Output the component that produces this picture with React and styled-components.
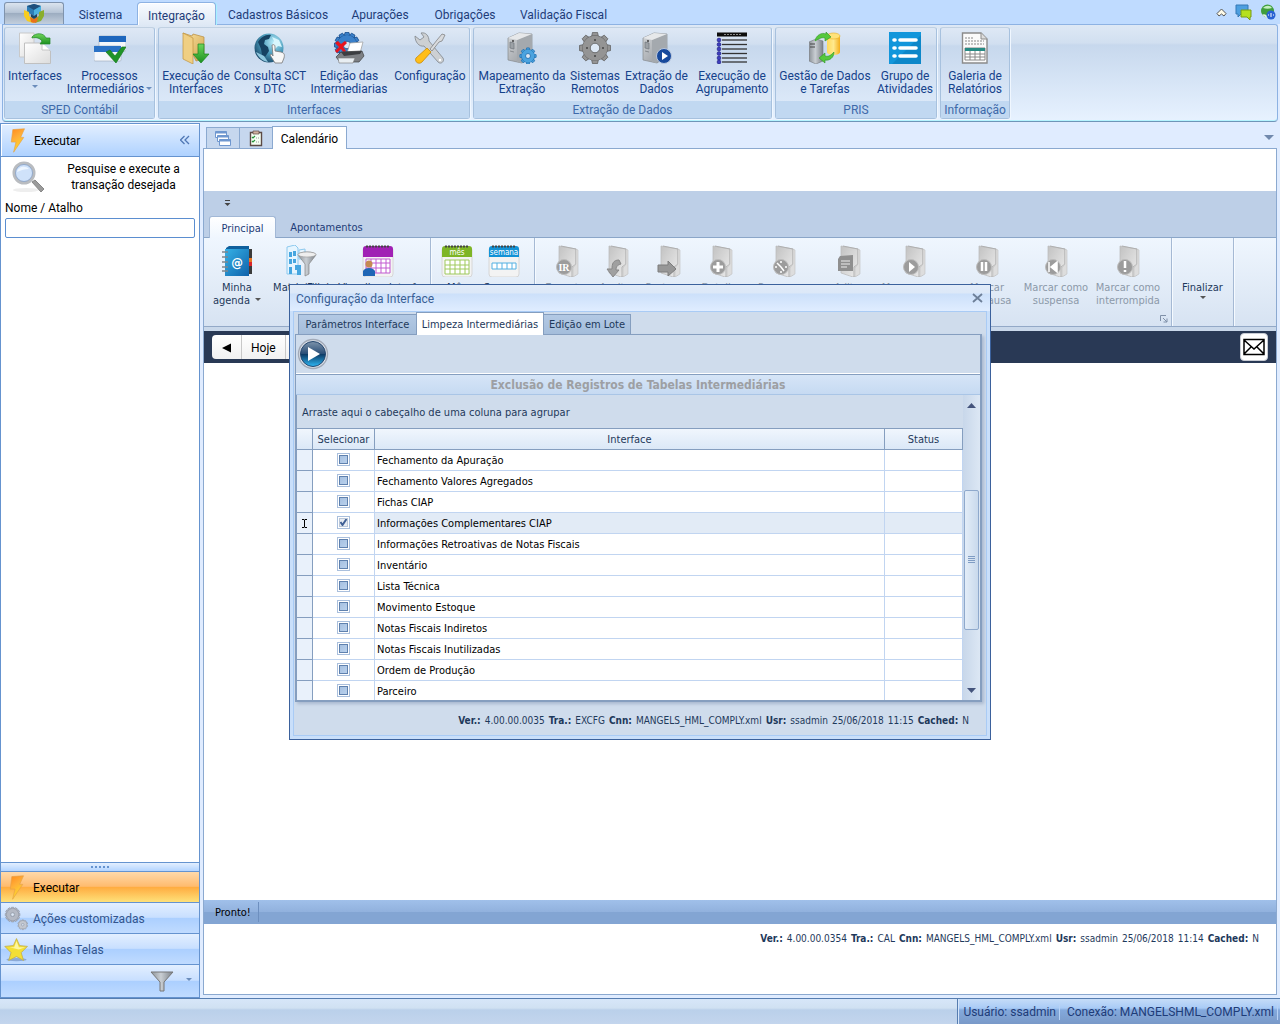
// App.jsx

import React, { useState } from 'react';
import styled, { createGlobalStyle, css } from 'styled-components';

const segoe = "Roboto, 'Open Sans', sans-serif";
const tahoma = "'DejaVu Sans Condensed', 'DejaVu Sans', sans-serif";

const GlobalStyle = createGlobalStyle`
  * {
    box-sizing: border-box;
  }
  body {
    margin: 0;
    font-family: ${segoe};
    font-size: 12px;
    color: #1e3c78;
    background: #e0ecff;
  }
  button, input {
    font: inherit;
    color: inherit;
    margin: 0;
  }
  button {
    padding: 0;
    border: 0;
    background: none;
    white-space: nowrap;
  }
  svg {
    display: block;
    flex: none;
  }
`;

const Page = styled.div`
  position: relative;
  min-height: 100vh;
  display: flex;
  flex-direction: column;
  overflow: hidden;
`;

/* ---------- top ribbon ---------- */

const TopBar = styled.header`
  height: 24px;
  display: flex;
  align-items: flex-end;
  padding: 0 4px;
  background: #bfdbff;
`;

const AppButton = styled.button`
  width: 60px;
  height: 22px;
  display: flex;
  justify-content: center;
  border: 1px solid #7f93ad;
  border-bottom: 0;
  border-radius: 3px 3px 0 0;
  background: linear-gradient(#dbe4ee 0, #b7c5d6 45%, #9dadc1 50%, #c3cfdd 100%);
`;

const TopTab = styled.button`
  width: ${(p) => p.$w}px;
  height: 22px;
  padding-top: 4px;
  line-height: 18px;
  ${(p) =>
    p.$active &&
    css`
      position: relative;
      z-index: 1;
      height: 23px;
      margin-bottom: -1px;
      padding-top: 3px;
      border: 1px solid #8db2e3;
      border-bottom: 0;
      border-radius: 4px 4px 0 0;
      background: linear-gradient(#f8fbff, #dfe9f5);
      box-shadow: inset 1px 1px 0 #ffffff, 1px 0 0 #a6f2ff;
    `}
`;

const TopTools = styled.div`
  margin-left: auto;
  height: 24px;
  display: flex;
  align-items: center;
  gap: 8px;
`;

const Ribbon = styled.div`
  height: 98px;
  margin: 0 2px;
  display: flex;
  gap: 3px;
  padding: 2px 1px;
  border: 1px solid #8db2e3;
  border-bottom-color: #6f95b8;
  border-radius: 0 3px 4px 4px;
  box-shadow: inset 0 -1px 0 #b5f4ff;
  background: linear-gradient(#dee8f5 0, #d1dff0 18px, #c7d8ed 20px, #e7f2ff 100%);
`;

const RibbonGroup = styled.section`
  height: 92px;
  display: flex;
  flex-direction: column;
  justify-content: space-between;
  border: 1px solid #a7c1de;
  border-top-color: #c1d1e2;
  border-radius: 3px;
  box-shadow: 1px 1px 0 #f0f7ff;
  background: linear-gradient(#dee8f5 0, #d1dff0 16px, #c7d8ed 18px, #dbe8f8 74px, #dbe8f8 100%);
`;

const GroupItems = styled.div`
  display: flex;
  padding-top: 4px;
`;

const GroupCaption = styled.div`
  height: 17px;
  line-height: 18px;
  text-align: center;
  white-space: nowrap;
  color: #3e6aaa;
  background: #c1d8f1;
`;

const RibbonButton = styled.button`
  width: ${(p) => p.$w}px;
  display: flex;
  flex-direction: column;
  align-items: center;
  gap: 6px;
  line-height: 13px;
  color: #15428b;
`;

const Label = styled.span`
  display: block;
  white-space: nowrap;
  text-align: center;
`;

const Caret = styled.i`
  display: ${(p) => (p.$block ? 'block' : 'inline-block')};
  width: 0;
  height: 0;
  margin: ${(p) => (p.$block ? '2px auto 0' : '0 0 3px 2px')};
  border: 3px solid transparent;
  border-top-color: ${(p) => p.$color || '#6a8cbb'};
  border-bottom: 0;
`;

/* ---------- body ---------- */

const Body = styled.div`
  flex: 1;
  display: flex;
  gap: 3px;
  padding: 1px 3px 0 0;
`;

const Sidebar = styled.aside`
  width: 200px;
  display: flex;
  flex-direction: column;
  border: 1px solid #6593cf;
  border-bottom: 0;
  background: #ffffff;
`;

const SideHeader = styled.div`
  height: 33px;
  padding: 0 9px 0 4px;
  display: flex;
  align-items: center;
  color: #000000;
  border-bottom: 1px solid #6593cf;
  background: linear-gradient(#e3efff, #afd2ff);
  box-shadow: inset 1px 1px 0 #ffffff;

  span {
    flex: 1;
    padding: 2px 0 0 4px;
  }
`;

const SearchBox = styled.div`
  flex: 1;
  padding: 4px 4px 0;
  color: #000000;
`;

const SearchHint = styled.div`
  display: flex;
  padding-left: 7px;
  line-height: 16px;

  p {
    flex: 1;
    margin: 0;
    padding-left: 8px;
    text-align: center;
  }
`;

const SearchLabel = styled.label`
  display: block;
  margin-top: 5px;
  line-height: 20px;
`;

const SearchInput = styled.input`
  display: block;
  width: 100%;
  height: 20px;
  padding: 0 4px;
  border: 1px solid #5b8ed0;
  border-radius: 2px;
  outline: 0;
`;

const Grip = styled.div`
  height: 9px;
  display: flex;
  justify-content: center;
  align-items: center;
  gap: 2px;
  border-top: 1px solid #6593cf;
  background: linear-gradient(#e3efff, #b3d4ff);

  i {
    width: 2px;
    height: 2px;
    background: #6593cf;
  }
`;

const SideItem = styled.button`
  height: 31px;
  padding: 0 3px;
  display: flex;
  align-items: center;
  gap: 4px;
  color: #32558e;
  border-top: 1px solid #6593cf;
  background: linear-gradient(#e3efff 0, #c8dfff 48%, #abcfff 50%, #c0dbff 100%);

  span {
    padding-top: 2px;
  }
  ${(p) =>
    p.$active &&
    css`
      color: #000000;
      background: linear-gradient(#ffd9aa 0, #ffbb6e 48%, #ffab3f 50%, #fee17a 100%);
    `}
`;

const SideFooter = styled.div`
  height: 34px;
  padding-right: 7px;
  display: flex;
  justify-content: flex-end;
  align-items: center;
  gap: 10px;
  border-top: 1px solid #6593cf;
  border-bottom: 1px solid #6593cf;
  background: linear-gradient(#e3efff 0, #c8dfff 48%, #abcfff 50%, #c0dbff 100%);
`;

const Main = styled.main`
  flex: 1;
  min-width: 0;
  display: flex;
  flex-direction: column;
  padding: 3px 0 3px;
`;

const DocTabs = styled.div`
  display: flex;
  align-items: flex-end;
  padding: 0 3px;
  color: #000000;
`;

const DocTab = styled.button`
  width: ${(p) => (p.$active ? 75 : 33)}px;
  height: 21px;
  display: flex;
  align-items: center;
  justify-content: center;
  border: 1px solid #8ba9d0;
  border-bottom: 0;
  border-right-width: ${(p) => (p.$active ? 1 : 0)}px;
  background: #c6d7ee;
  ${(p) =>
    p.$active &&
    css`
      position: relative;
      height: 23px;
      margin-bottom: -1px;
      padding-top: 2px;
      background: #ffffff;
    `}
`;

const DocMenu = styled.button`
  margin: 0 0 8px auto;
  border: 5px solid transparent;
  border-top-color: #7189ad;
  border-bottom: 0;
`;

const Document = styled.div`
  flex: 1;
  display: flex;
  flex-direction: column;
  padding-top: 42px;
  border: 1px solid #8ba9d0;
  background: #ffffff;
`;

const Filler = styled.div`
  flex: 1;
`;

const TabBand = styled.div`
  height: 47px;
  display: flex;
  flex-direction: column;
  justify-content: space-between;
  padding: 8px 5px 0;
  font-family: ${tahoma};
  font-size: 11px;
  border-bottom: 1px solid #8ba6c8;
  background: #bdcfe7;
`;

const QuickMenu = styled.button`
  align-self: flex-start;
  margin-left: 15px;
`;

const BandTabs = styled.div`
  display: flex;
`;

const BandTab = styled.button`
  width: ${(p) => p.$w}px;
  height: 22px;
  margin-bottom: -1px;
  line-height: 24px;
  ${(p) =>
    p.$active &&
    css`
      border: 1px solid #a2b8d6;
      border-bottom: 0;
      border-radius: 3px 3px 0 0;
      background: linear-gradient(#ffffff, #eff6fe);
    `}
`;

const InnerRibbon = styled.div`
  height: 89px;
  display: flex;
  font-family: ${tahoma};
  font-size: 11px;
  background: linear-gradient(#eff6fe, #d7e3f2);
  border-bottom: 1px solid #93a9c7;
`;

const InnerGroup = styled.div`
  width: ${(p) => p.$w}px;
  display: flex;
  padding-top: 7px;
  border-right: 1px solid #a5b9d4;
  box-shadow: 1px 0 0 #f5faff;
`;

const InnerButton = styled.button`
  width: ${(p) => p.$w}px;
  height: 62px;
  flex: none;
  display: flex;
  flex-direction: column;
  align-items: center;
  gap: 4px;
  line-height: 13px;
  color: #1e395b;

  &:disabled {
    color: #8c99a9;
  }
`;

const InnerText = styled(InnerButton)`
  height: 54px;
  justify-content: flex-end;
`;

const Launcher = styled.button`
  align-self: flex-end;
  margin: 0 3px 3px auto;
`;

const NavBar = styled.div`
  height: 36px;
  padding: 0 8px;
  display: flex;
  justify-content: space-between;
  align-items: center;
  border-top: 4px solid #c9d8ea;
  background: #293955;
  color: #000000;
`;

const NavButtons = styled.div`
  display: flex;
  height: 24px;
  border-radius: 4px;
  background: linear-gradient(#ffffff, #f1f1f1);

  button {
    padding: 1px 9px 0;
    border-right: 1px solid #c8c8c8;
  }
`;

const MailButton = styled.button`
  width: 28px;
  height: 28px;
  display: grid;
  place-items: center;
  border: 1px solid #c8ccd4;
  border-radius: 4px;
  background: #ffffff;
`;

const ReadyBar = styled.div`
  height: 24px;
  display: flex;
  align-items: center;
  padding-left: 11px;
  font-family: ${tahoma};
  font-size: 11px;
  color: #000000;
  background: linear-gradient(#a0c0ea 0, #91b1dd 50%, #83a5d3 52%, #83a5d3 100%);

  span {
    padding: 2px 7px 0 0;
    line-height: 18px;
    border-right: 1px solid #6d8fbf;
  }
`;

const InfoLine = styled.div`
  display: flex;
  justify-content: flex-end;
  gap: 4px;
  padding: ${(p) => p.$pad};
  line-height: 12px;
  font-family: ${tahoma};
  font-size: 10px;
  white-space: nowrap;
  color: #1e395b;
`;

const StatusBar = styled.footer`
  height: 26px;
  display: flex;
  justify-content: flex-end;
  border-top: 1px solid #567db0;
  background: linear-gradient(#d7e6f9 0, #d0e1f2 9px, #bad0ea 11px, #c3d5ed 100%);
`;

const StatusInfo = styled.div`
  display: flex;
  align-items: center;
  padding: 0 2px 0 4px;
  line-height: 16px;
  border-left: 1px solid #567db0;
  box-shadow: inset 1px 0 0 #d6e6fb;
  background: linear-gradient(#c5dcf8 0, #a9cbf6 9px, #84a9dc 11px, #7999c8 100%);

  span {
    padding: 0 3px 0 1px;
    border-right: 1px solid #b7d2f5;
  }
  span + span {
    padding-left: 7px;
  }
`;

/* ---------- dialog ---------- */

const Overlay = styled.div`
  position: absolute;
  inset: 0;
  display: grid;
  place-items: center;
`;

const Dialog = styled.div`
  width: 702px;
  border: 1px solid #3b619c;
  padding: 0 3px 3px;
  font-family: ${tahoma};
  font-size: 11px;
  color: #1e395b;
  background: #c9dffa;
`;

const DialogTitle = styled.div`
  height: 26px;
  margin: 0 -3px;
  padding: 0 7px 0 6px;
  display: flex;
  justify-content: space-between;
  align-items: center;
  font-family: ${segoe};
  font-size: 12px;
  color: #3a5f95;
  background: linear-gradient(#e1ebf8 0, #dce8f8 8px, #cce0fa 9px, #e0edff 100%);

  span {
    padding-top: 2px;
  }
`;

const DialogBody = styled.div`
  border: 1px solid #a9cbf5;
  padding: 0 1px 1px;
  background: #cfdcec;
`;

const PaneTabs = styled.div`
  display: flex;
  align-items: flex-end;
  padding-left: 3px;
`;

const PaneTab = styled.button`
  width: ${(p) => p.$w}px;
  height: 20px;
  border: 1px solid #859ebf;
  border-bottom: 0;
  background: linear-gradient(#b3c9e4, #a4bddb);
  ${(p) =>
    p.$active &&
    css`
      position: relative;
      height: 23px;
      margin: 0 -1px -1px;
      background: #ffffff;
    `}
`;

const Pane = styled.div`
  margin-right: 3px;
  border: 1px solid #859ebf;
  border-width: 1px 2px 2px 1px;
  box-shadow: 2px 2px 3px #a9b9d0;
`;

const PaneToolbar = styled.div`
  height: 39px;
  padding: 3px 1px;
  border-bottom: 1px solid #ffffff;
`;

const PaneTitle = styled.h2`
  height: 21px;
  margin: 0;
  line-height: 20px;
  text-align: center;
  font-size: 12px;
  font-weight: bold;
  color: #9d9fa3;
  border-top: 1px solid #859ebf;
  border-bottom: 1px solid #a9c5e6;
  background: linear-gradient(#d6e5f7, #c6daf2);
`;

const GridArea = styled.div`
  height: 305px;
  display: flex;
  border-left: 1px solid #859ebf;
`;

const GridContent = styled.div`
  flex: 1;
  overflow: hidden;
`;

const GroupHint = styled.div`
  height: 33px;
  padding: 9px 5px 0;
  line-height: 18px;
`;

const Table = styled.table`
  width: 100%;
  table-layout: fixed;
  border-collapse: separate;
  border-spacing: 0;
  color: #000000;
  background: #ffffff;

  th {
    height: 22px;
    padding: 0;
    font-weight: normal;
    color: #1e395b;
    border: 1px solid #859ebf;
    border-left: 0;
    background: linear-gradient(#f0f6fd, #dbe8f7);
  }
  td {
    height: 21px;
    padding: 0 2px;
    line-height: 16px;
    border-right: 1px solid #c1d5f1;
    border-bottom: 1px solid #c1d5f1;
  }
  td:first-child {
    border-color: #859ebf;
    background: #e9f1fb;
  }
  td:nth-child(2) {
    text-align: center;
  }
`;

const Row = styled.tr`
  td:nth-child(n + 3) {
    padding-top: 1px;
    background: ${(p) => (p.$selected ? '#e2ebf6' : '#ffffff')};
  }
`;

const Check = styled.input`
  appearance: none;
  display: block;
  width: 13px;
  height: 13px;
  margin: 0 auto 1px;
  border: 1px solid #a9bfdd;
  background: linear-gradient(135deg, #a3bedf, #bcd3ee) content-box;
  padding: 1px;
  box-shadow: inset 0 0 0 1px #ffffff, inset 0 0 0 2px #5f81ae;

  &:checked {
    box-shadow: inset 0 0 0 1px #ffffff, inset 0 0 0 2px #b9c6d8;
    background: url("data:image/svg+xml,%3Csvg xmlns='http://www.w3.org/2000/svg' viewBox='0 0 11 11'%3E%3Cpath d='M2.5 5l2 3 4-6' fill='none' stroke='%233f5f95' stroke-width='2'/%3E%3C/svg%3E"), #e6ebf2;
  }
`;

const ScrollBar = styled.div`
  width: 17px;
  display: flex;
  flex-direction: column;
  align-items: center;
  background: linear-gradient(90deg, #c8d7ea, #dce7f4);
`;

const ScrollArrow = styled.button`
  width: 16px;
  height: 20px;
  display: grid;
  place-items: center;
`;

const ScrollTrack = styled.div`
  flex: 1;
  padding-top: 75px;
`;

const Thumb = styled.div`
  width: 15px;
  height: 140px;
  display: grid;
  place-items: center;
  border: 1px solid #8fa9cc;
  border-radius: 2px;
  background: linear-gradient(90deg, #e3edf8, #c9d9ec);
`;

/* ---------- icons ---------- */

const Defs = () => (
  <svg width="0" height="0" style={{ position: 'absolute' }} aria-hidden="true">
    <defs>
      <linearGradient id="paper" x1="0" y1="0" x2="1" y2="1">
        <stop offset="0" stopColor="#ffffff" />
        <stop offset="1" stopColor="#dcdcdc" />
      </linearGradient>
      <linearGradient id="green" x1="0" y1="0" x2="0" y2="1">
        <stop offset="0" stopColor="#6fd45a" />
        <stop offset="1" stopColor="#1c9222" />
      </linearGradient>
      <linearGradient id="metal" x1="0" y1="0" x2="1" y2="0">
        <stop offset="0" stopColor="#8d9399" />
        <stop offset="0.45" stopColor="#c9ced3" />
        <stop offset="1" stopColor="#7b8188" />
      </linearGradient>
      <linearGradient id="steel" x1="0" y1="0" x2="1" y2="1">
        <stop offset="0" stopColor="#d3d6d9" />
        <stop offset="1" stopColor="#8e9297" />
      </linearGradient>
      <linearGradient id="blue" x1="0" y1="0" x2="1" y2="1">
        <stop offset="0" stopColor="#35b1e6" />
        <stop offset="1" stopColor="#0f62ab" />
      </linearGradient>
      <linearGradient id="fold" x1="0" y1="0" x2="1" y2="1">
        <stop offset="0" stopColor="#f9e3a4" />
        <stop offset="1" stopColor="#d3a44c" />
      </linearGradient>
      <linearGradient id="grayFold" x1="0" y1="0" x2="1" y2="1">
        <stop offset="0" stopColor="#c2c2c2" />
        <stop offset="1" stopColor="#ececec" />
      </linearGradient>
      <linearGradient id="bolt" x1="0" y1="0" x2="0.4" y2="1">
        <stop offset="0" stopColor="#ff8a1c" />
        <stop offset="0.45" stopColor="#ffae38" />
        <stop offset="1" stopColor="#ffdc2a" />
      </linearGradient>
      <linearGradient id="gold" x1="0" y1="0" x2="1" y2="0">
        <stop offset="0" stopColor="#ffd95a" />
        <stop offset="0.5" stopColor="#ffe98e" />
        <stop offset="1" stopColor="#f4ae1c" />
      </linearGradient>
      <radialGradient id="globe" cx="0.65" cy="0.3" r="0.8">
        <stop offset="0" stopColor="#b8ecfa" />
        <stop offset="0.5" stopColor="#4c9dbd" />
        <stop offset="1" stopColor="#123c5c" />
      </radialGradient>
      <linearGradient id="play" x1="0" y1="0" x2="0" y2="1">
        <stop offset="0" stopColor="#7d93ab" />
        <stop offset="0.48" stopColor="#2c5078" />
        <stop offset="0.5" stopColor="#0c3862" />
        <stop offset="1" stopColor="#2fb8f5" />
      </linearGradient>
    </defs>
  </svg>
);

const Svg = ({ size = 32, children }) => (
  <svg width={size} height={size} viewBox="0 0 32 32" aria-hidden="true">
    {children}
  </svg>
);

const Gear = ({ x = 16, y = 16, r = 12, fill = '#999', stroke = '#666', teeth = 8, hole = 0.38 }) => (
  <g transform={`translate(${x} ${y})`}>
    {Array.from({ length: teeth }, (_, i) => (
      <path
        key={i}
        transform={`rotate(${(i * 360) / teeth})`}
        d={`M${-r * 0.3} ${-r * 0.8}L${-r * 0.2} ${-r * 1.25}H${r * 0.2}L${r * 0.3} ${-r * 0.8}z`}
        fill={fill}
        stroke={stroke}
        strokeWidth="0.8"
      />
    ))}
    <circle r={r * 0.68} fill="none" stroke={stroke} strokeWidth={r * 0.62 + 0.8} />
    <circle r={r * 0.68} fill="none" stroke={fill} strokeWidth={r * 0.62} />
    <circle r={r * hole} fill="#dde8f5" stroke={stroke} strokeWidth="0.8" />
  </g>
);

const LogoIcon = () => (
  <svg width="22" height="21" viewBox="0 0 22 21" aria-hidden="true">
    <path d="M4 3l7-2 7 2v6l-7 4-7-4z" fill="#2d7cb5" />
    <path d="M4 3l7-2 7 2-7 4z" fill="#1f4f7c" />
    <path d="M11 7l7-4v6l-7 4z" fill="#4bb0de" />
    <path d="M1 7l5 2v4l4 2v5l-6-2-3-5z" fill="#f7cc1e" />
    <path d="M21 7l-5 2v4l-4 2v5l6-2 3-5z" fill="#8aae2c" />
    <path d="M7 14l4 2 4-2-1 5-3 1-3-1z" fill="#e9731a" />
    <path d="M8 11l3 2 3-2v3l-3 2-3-2z" fill="#1b4466" />
  </svg>
);

const CopyIcon = () => (
  <Svg>
    <path d="M0.500 1H15v24H0.500z" fill="url(#paper)" stroke="#c9c9c9" />
    <path d="M5.500 11h17l9 8v12.500h-26z" fill="url(#paper)" stroke="#c0c0c0" />
    <path d="M23 11v7h8" fill="#ffffff" stroke="#c6c6c6" />
    <path d="M13 5C17 0 25 1 27 6h4v6H21l2-3c-2-3-6-4-10-3z" fill="url(#green)" stroke="#24882a" strokeWidth="0.700" />
  </Svg>
);

const ProcessIcon = () => (
  <Svg>
    <rect x="5" y="4" width="27" height="15" rx="1" fill="#f4f7fb" stroke="#9aa9ba" strokeWidth="0.600" />
    <path d="M5 4h27v6H5z" fill="#1d66bd" />
    <rect x="0" y="14" width="27" height="15" rx="1" fill="#f4f7fb" stroke="#9aa9ba" strokeWidth="0.600" />
    <path d="M0 14h27v6H0z" fill="#2b72c6" />
    <path d="M12 20l4-2 5 6 7-9h4L22 31z" fill="#1f9427" stroke="#157a1c" strokeWidth="0.700" />
  </Svg>
);

const FolderDownIcon = () => (
  <Svg>
    <path d="M3 1l9 3 1-2 11 3v22l-8 2z" fill="url(#fold)" stroke="#b88b3c" strokeWidth="0.700" />
    <path d="M3 1l10 5v26L3 27z" fill="#f0cf83" stroke="#c0943f" strokeWidth="0.700" />
    <path d="M18 12h6v10h5l-8 9-8-9h5z" fill="url(#green)" stroke="#1b8520" strokeWidth="0.700" />
  </Svg>
);

const GlobeIcon = () => (
  <Svg>
    <circle cx="15" cy="16" r="14.500" fill="url(#globe)" />
    <path d="M4 10c3-5 8-8 13-7l-2 4-4 1-1 4 4 3 1 4-4 6-3-2-1-6z" fill="#164262" />
    <path d="M18 5l7 3 3 7-4-1-3 3-3-4 2-4z" fill="#d8f6fd" />
    <path d="M2 20c2 5 6 9 12 10l-4-6z" fill="#8fc7de" />
    <path d="M18 13c2-1 3 0 3 2v4l6 1c3 1 4 2 3 6l-2 5h-7l-5-8c1-1 2-1 3 1z" fill="#f7f7f7" stroke="#777777" strokeWidth="0.800" />
  </Svg>
);

const GearPrinterIcon = () => (
  <Svg>
    <Gear x={14} y={13} r={10} fill="#3a80c9" stroke="#174e8d" teeth={12} />
    <path d="M2 11l3-2 3 3 4-3 2 2-4 4 3 4-2 2-3-4-4 4-2-2 4-4z" fill="#e8141e" />
    <path d="M17 11l13-1-3 11H14z" fill="#ffffff" stroke="#999999" strokeWidth="0.700" />
    <path d="M8 20l21-1 2 5-5 6H7l-4-5z" fill="#7d8084" stroke="#3d3f41" strokeWidth="0.700" />
    <path d="M8 20l21-1-2 3-16 2z" fill="#3c3e41" />
    <path d="M5 26h17l-2 5H6z" fill="#e8eef2" stroke="#777777" strokeWidth="0.600" />
  </Svg>
);

const ToolsIcon = () => (
  <Svg>
    <path d="M1 4l5 4 4-3-3-4c5-1 8 3 8 8l14 17c2 3-2 7-5 4L10 14C5 15 1 10 1 4z" fill="#cdd0d3" stroke="#80858a" strokeWidth="0.800" />
    <path d="M28 2l3 1-3 6-3 1-7 9-2-2 7-9z" fill="#d8dadd" stroke="#777777" strokeWidth="0.700" />
    <path d="M13 16l4 4-9 10c-3 3-8 0-6-4z" fill="#ffbe18" stroke="#c98a06" strokeWidth="0.800" />
    <circle cx="26" cy="28" r="1.200" fill="#ffffff" />
  </Svg>
);

const Server = () => (
  <g>
    <path d="M2 6l11-5 13 1v22l-10 7-14-3z" fill="url(#steel)" stroke="#85898e" strokeWidth="0.700" />
    <path d="M11 8l15-6v22l-11 7-4-1z" fill="#a4a9ae" />
    <path d="M2 6l11-5 13 1-15 6z" fill="#e6e8ea" />
    <path d="M4 10l4 1v6l-4-1zM4 19l4 1" fill="#9ca1a6" stroke="#70757b" strokeWidth="0.700" />
    <circle cx="7" cy="9" r="0.900" fill="#333333" />
  </g>
);

const ServerGearIcon = () => (
  <Svg>
    <Server />
    <Gear x={22} y={24} r={6.5} fill="#4ba3df" stroke="#1f6fb0" />
  </Svg>
);

const GearIcon = () => (
  <Svg>
    <Gear r={12.5} fill="#949494" stroke="#606060" />
    <circle cx="16" cy="8" r="1" fill="#444444" />
    <circle cx="16" cy="24" r="1" fill="#444444" />
    <circle cx="8" cy="16" r="1" fill="#444444" />
    <circle cx="24" cy="16" r="1" fill="#444444" />
  </Svg>
);

const ServerPlayIcon = () => (
  <Svg>
    <Server />
    <circle cx="23" cy="24" r="7.500" fill="#17499c" stroke="#b9c7de" />
    <path d="M21 20l6 4-6 4z" fill="#ffffff" />
  </Svg>
);

const GroupRunIcon = () => (
  <Svg>
    <path d="M1 0.500h30v4H1z" fill="#0d0d0d" />
    <path d="M8 2.500h18" stroke="#888888" strokeDasharray="2 1" />
    {[8, 12.5, 17, 21.5, 26, 30].map((y) => (
      <g key={y}>
        <path d={`M6 ${y}h25`} stroke="#333333" strokeWidth="1.300" />
        <circle cx="3" cy={y} r="1.900" fill="#3e3ebd" stroke="#1a1a80" strokeWidth="0.600" />
      </g>
    ))}
  </Svg>
);

const SyncIcon = () => (
  <Svg>
    <path d="M0 10l7-3 7 2v20l-7 3-7-3z" fill="url(#metal)" stroke="#767b80" strokeWidth="0.600" />
    <path d="M1 12h5M1 15h5" stroke="#444444" />
    <path d="M18 4v16c0 4 13 4 13 0V4z" fill="url(#gold)" />
    <ellipse cx="24.500" cy="4" rx="6.500" ry="3" fill="#ffe27a" stroke="#e5ae25" strokeWidth="0.600" />
    <path d="M6 9c1-6 7-9 11-7V0l5 5-6 4V6c-4-1-6 1-10 3z" fill="#55c83c" stroke="#2e9322" strokeWidth="0.600" />
    <path d="M25 20c0 6-5 9-9 8v3l-6-5 6-5v3c4 1 6-1 9-4z" fill="#55c83c" stroke="#2e9322" strokeWidth="0.600" />
  </Svg>
);

const ListIcon = () => (
  <Svg>
    <path d="M0 0h32v32H0z" fill="#1296db" />
    <path d="M3 32L32 3v29z" fill="#0d87c9" />
    <path d="M11 8h16M11 16h16M11 24h16" stroke="#ffffff" strokeWidth="3.600" strokeLinecap="round" />
    <path d="M5 8h1M5 16h1M5 24h1" stroke="#ffffff" strokeWidth="3.600" strokeLinecap="round" />
  </Svg>
);

const ReportIcon = () => (
  <Svg>
    <path d="M3.500 1H22l6 6v24H3.500z" fill="#fafafa" stroke="#8b8b8b" strokeWidth="1.400" />
    <path d="M22 1v6h6" fill="#dddddd" stroke="#8b8b8b" />
    <path d="M6 6h8M6 9h19M6 12h19" stroke="#888888" strokeDasharray="2 1" />
    <path d="M6 16h20v12H6z" fill="#ffffff" stroke="#888888" />
    <path d="M6 16h20v3H6z" fill="#268a83" />
    <path d="M6 22h20M6 25h20M11 19v9M16 19v9M21 19v9" stroke="#888888" />
  </Svg>
);

const BoltIcon = () => (
  <Svg size={25}>
    <path d="M10 2L25 1l-5 11h4L11 31l3-13H8z" fill="url(#bolt)" stroke="#e3a046" strokeWidth="0.800" />
  </Svg>
);

const SearchIcon = () => (
  <Svg>
    <ellipse cx="14" cy="29" rx="13" ry="2" fill="#eeeeee" />
    <path d="M20 21l3-2 9 9-3 3z" fill="#9b9b9b" stroke="#888888" />
    <circle cx="12" cy="12" r="10" fill="#cfe2fa" stroke="#b9bcc0" strokeWidth="3" />
    <path d="M5 11c1-5 8-7 12-3-4 0-8 1-12 3z" fill="#eef6ff" />
    <circle cx="12" cy="12" r="8.500" fill="none" stroke="#7c99c4" strokeWidth="0.700" />
  </Svg>
);

const GearsIcon = () => (
  <Svg size={25}>
    <Gear x={11} y={11} r={7.5} fill="#b4b9c4" stroke="#8e95a2" teeth={12} hole={0.3} />
    <Gear x={24} y={24} r={5} fill="#c3c7cf" stroke="#969ca7" teeth={10} hole={0.3} />
  </Svg>
);

const StarIcon = () => (
  <Svg size={25}>
    <ellipse cx="16" cy="29" rx="13" ry="2" fill="#8ba9d6" />
    <path d="M16 2l4 9 10 1-8 8 3 10-9-5-10 5 3-10-8-8 11-1z" fill="#f3df35" stroke="#c0ac4a" />
    <path d="M16 5l3 8h8l-8 3-12-3h6z" fill="#fdf6a0" />
  </Svg>
);

const FilterIcon = () => (
  <svg width="24" height="21" viewBox="0 0 24 21" aria-hidden="true">
    <path d="M1 1h22L14 11v9h-4v-9z" fill="url(#metal)" stroke="#777777" />
  </svg>
);

const WindowsIcon = () => (
  <svg width="17" height="17" viewBox="0 0 17 17" aria-hidden="true">
    {[[0.5, 1.5], [2.5, 5.5], [4.5, 9.5]].map(([x, y]) => (
      <g key={y}>
        <path d={`M${x} ${y}h11v6h-11z`} fill="#ffffff" stroke="#6f97cf" />
        <path d={`M${x} ${y + 1}h11`} stroke="#6f97cf" strokeWidth="2" />
      </g>
    ))}
  </svg>
);

const ClipboardIcon = () => (
  <svg width="14" height="17" viewBox="0 0 14 17" aria-hidden="true">
    <path d="M1.500 2.500h11v13h-11z" fill="#f5fff3" stroke="#5c4a45" strokeWidth="1.400" />
    <path d="M4 1h6v3H4z" fill="#cfb19f" stroke="#5c4a45" strokeWidth="0.700" />
    <path d="M3 7l1 1 2-2M3 11l1 1 2-2" fill="none" stroke="#25933a" strokeWidth="1.200" />
    <path d="M7 8h4M7 12h4" stroke="#999999" strokeDasharray="1 1" />
  </svg>
);

const AgendaIcon = () => (
  <Svg>
    <path d="M27 4h4v25h-4z" fill="#3b3b3b" />
    <path d="M28 13h3v4h-3z" fill="#e87722" />
    <path d="M28 17h3v4h-3z" fill="#d9252a" />
    <path d="M5 3l3-2h20v28l-3 2H5z" fill="#0f5f9c" />
    <path d="M4 4h24v27H4z" fill="url(#blue)" />
    <path d="M1 7h6M1 12h6M1 17h6M1 22h6M1 26h6" stroke="#7d858c" strokeWidth="1.600" />
    <text x="16" y="22" textAnchor="middle" fontSize="13" fontWeight="bold" fill="#ffffff">@</text>
  </Svg>
);

const MatrixIcon = () => (
  <Svg>
    <path d="M2 2l8-2 3 3v26H2zM14 5l6-1v10h-6z" fill="#e6f5ff" stroke="#8cc9ee" />
    <path d="M4 7h3v5H4zM8 6h3v5H8zM4 14h3v5H4zM8 14h3v4H8zM4 22h3v7H4zM10 20h6v10h-4v-5h-2z" fill="#45a6e0" />
    <path d="M13 10c0-4 18-4 18 0l-7 9v10l-4 2V19z" fill="url(#metal)" stroke="#858585" strokeWidth="0.700" />
    <ellipse cx="22" cy="9.500" rx="9" ry="2.500" fill="#eeeeee" stroke="#999999" strokeWidth="0.600" />
  </Svg>
);

const Calendar = ({ color, text, children }) => (
  <Svg>
    <rect x="1" y="2" width="30" height="30" rx="3" fill="#f3f3f3" stroke="#d6d6d6" />
    <path d="M1 12V4c0-2 1-3 3-3h24c2 0 3 1 3 3v8z" fill={color} />
    <path d="M4 1.500h24" stroke="#444444" strokeWidth="2" strokeDasharray="2 1" />
    <text x="16" y="10" textAnchor="middle" fontSize="8" fill="#ffffff">{text}</text>
    {children}
  </Svg>
);

const UserCalendarIcon = () => (
  <Calendar color="#a020b4">
    <path d="M4 14h24v14H4zM4 18h24M4 23h24M9 14v14M14 14v14M19 14v14M24 14v14" fill="#ffffff" stroke="#c15bd0" />
    <circle cx="7" cy="19" r="3.500" fill="#c58a52" />
    <path d="M1 31v-5c2-4 10-4 12 0v5z" fill="#1f66b5" />
  </Calendar>
);

const MonthIcon = () => (
  <Calendar color="#7eb526" text="mês">
    <path d="M4 15h24v14H4zM4 20h24M4 24h24M9 15v14M14 15v14M19 15v14M24 15v14" fill="#ffffff" stroke="#9fc95c" />
  </Calendar>
);

const WeekIcon = () => (
  <Calendar color="#1292d6" text="semana">
    <path d="M4 18h24v6H4zM9 18v6M14 18v6M19 18v6M24 18v6" fill="#ffffff" stroke="#52b0e2" />
  </Calendar>
);

const badges = {
  ir: <text x="9" y="26" textAnchor="middle" fontSize="10" fontWeight="bold" fontFamily="Liberation Serif" fill="#ffffff">IR</text>,
  plus: <path d="M9 17v10M4 22h10" stroke="#ffffff" strokeWidth="3" />,
  clock: <path d="M9 22L5 18M9 22l3 4M9 16v2M9 26v2M3 22h2M13 22h2" stroke="#ffffff" strokeWidth="1.500" />,
  play: <path d="M7 17l6 5-6 5z" fill="#ffffff" />,
  pause: <path d="M7 17v9M11 17v9" stroke="#ffffff" strokeWidth="2.500" />,
  back: <path d="M5 17v10M13 17l-6 5 6 5z" fill="#ffffff" stroke="#ffffff" strokeWidth="1.500" />,
  alert: <path d="M9 16v7M9 25v2" stroke="#ffffff" strokeWidth="2.500" />,
};

const FolderIcon = ({ kind }) => (
  <Svg>
    <g transform="translate(4 0)">
      <path d="M4 1l17 3v26l-5 2-12-4z" fill="url(#grayFold)" stroke="#b9b9b9" strokeWidth="0.700" />
      <path d="M6 1l15 3v15l-4 3v10" fill="none" stroke="#adadad" strokeWidth="0.900" />
      <path d="M21 4l2 1v24l-5 3v-9l3-4z" fill="#dddddd" stroke="#bfbfbf" strokeWidth="0.600" />
      {badges[kind] && <circle cx="9" cy="22" r="7.500" fill="#9c9c9c" stroke="#bdbdbd" />}
      {badges[kind]}
      {kind === 'down' && <path d="M14 15c-6 0-7 4-7 9H2l6 8 6-7h-3c0-3 1-5 5-6z" fill="#a0a0a0" stroke="#888888" />}
      {kind === 'right' && <path d="M1 20h10v-4l8 8-8 7v-4H1z" fill="#979797" stroke="#7d7d7d" />}
      {kind === 'note' && (
        <g>
          <path d="M3 11l13-1v16H1V14z" fill="#8f8f8f" />
          <path d="M4 16h9M4 19h9M4 22h6" stroke="#eeeeee" />
        </g>
      )}
    </g>
  </Svg>
);

const RunIcon = () => (
  <svg width="32" height="32" viewBox="0 0 32 32" aria-hidden="true">
    <circle cx="16" cy="16" r="14.500" fill="#dfe3ea" stroke="#a2aab8" strokeWidth="1.400" />
    <circle cx="16" cy="16" r="12.500" fill="url(#play)" stroke="#24466e" />
    <path d="M11 9l12 7-12 7z" fill="#ffffff" />
  </svg>
);

/* ---------- data ---------- */

const topTabs = [
  ['Sistema', 73],
  ['Integração', 79],
  ['Cadastros Básicos', 124],
  ['Apurações', 80],
  ['Obrigações', 90],
  ['Validação Fiscal', 107],
];

const ribbonGroups = [
  {
    caption: 'SPED Contábil',
    items: [
      { lines: ['Interfaces'], w: 60, icon: <CopyIcon />, caret: true },
      { lines: ['Processos', 'Intermediários'], w: 89, icon: <ProcessIcon />, caret: true },
    ],
  },
  {
    caption: 'Interfaces',
    items: [
      { lines: ['Execução de', 'Interfaces'], w: 74, icon: <FolderDownIcon /> },
      { lines: ['Consulta SCT', 'x DTC'], w: 74, icon: <GlobeIcon /> },
      { lines: ['Edição das', 'Intermediarias'], w: 84, icon: <GearPrinterIcon /> },
      { lines: ['Configuração'], w: 78, icon: <ToolsIcon /> },
    ],
  },
  {
    caption: 'Extração de Dados',
    items: [
      { lines: ['Mapeamento da', 'Extração'], w: 96, icon: <ServerGearIcon /> },
      { lines: ['Sistemas', 'Remotos'], w: 50, icon: <GearIcon /> },
      { lines: ['Extração de', 'Dados'], w: 73, icon: <ServerPlayIcon /> },
      { lines: ['Execução de', 'Agrupamento'], w: 78, icon: <GroupRunIcon /> },
    ],
  },
  {
    caption: 'PRIS',
    items: [
      { lines: ['Gestão de Dados', 'e Tarefas'], w: 98, icon: <SyncIcon /> },
      { lines: ['Grupo de', 'Atividades'], w: 62, icon: <ListIcon /> },
    ],
  },
  {
    caption: 'Informação',
    items: [{ lines: ['Galeria de', 'Relatórios'], w: 68, icon: <ReportIcon /> }],
  },
];

const taskActions = [
  { lines: ['Executar'], w: 64, kind: 'ir' },
  { lines: ['Aceitar'], w: 36, kind: 'down' },
  { lines: ['Postergar'], w: 68, kind: 'right' },
  { lines: ['Detalhe'], w: 36, kind: 'plus' },
  { lines: ['Programar'], w: 90, kind: 'clock' },
  { lines: ['Aditar'], w: 40, kind: 'note' },
  { lines: ['Marcar como', 'iniciada'], w: 90, kind: 'play' },
  { lines: ['Marcar', 'em pausa'], w: 56, kind: 'pause' },
  { lines: ['Marcar como', 'suspensa'], w: 82, kind: 'back' },
  { lines: ['Marcar como', 'interrompida'], w: 62, kind: 'alert' },
];

const initialRows = [
  'Fechamento da Apuração',
  'Fechamento Valores Agregados',
  'Fichas CIAP',
  'Informações Complementares CIAP',
  'Informações Retroativas de Notas Fiscais',
  'Inventário',
  'Lista Técnica',
  'Movimento Estoque',
  'Notas Fiscais Indiretos',
  'Notas Fiscais Inutilizadas',
  'Ordem de Produção',
  'Parceiro',
].map((name) => ({ name, checked: name === 'Informações Complementares CIAP' }));

/* ---------- components ---------- */

const Lines = ({ lines }) =>
  lines.map((line, i) => (
    <React.Fragment key={line}>
      {i > 0 && <br />}
      {line}
    </React.Fragment>
  ));

const VersionInfo = ({ pad, version, tra, time }) => (
  <InfoLine $pad={pad}>
    <b>Ver.:</b>
    <span>{version}</span>
    <b>Tra.:</b>
    <span>{tra}</span>
    <b>Cnn:</b>
    <span>MANGELS_HML_COMPLY.xml</span>
    <b>Usr:</b>
    <span>ssadmin</span>
    <span>25/06/2018</span>
    <span>{time}</span>
    <b>Cached:</b>
    <span>N</span>
  </InfoLine>
);

const TopRibbon = () => (
  <>
    <TopBar>
      <AppButton aria-label="Menu">
        <LogoIcon />
      </AppButton>
      {topTabs.map(([name, w]) => (
        <TopTab key={name} $w={w} $active={name === 'Integração'}>
          {name}
        </TopTab>
      ))}
      <TopTools>
        <button aria-label="Recolher">
          <svg width="11" height="9" viewBox="0 0 11 9">
            <path d="M5.500 1L10 5.500 8 8 5.500 6 3 8 1 5.500z" fill="#fffbe8" stroke="#555555" />
          </svg>
        </button>
        <button aria-label="Mensagens">
          <svg width="17" height="17" viewBox="0 0 17 17">
            <path d="M1 1h12v9H6l-3 3v-3H1z" fill="#4d9fe0" stroke="#3479b5" />
            <path d="M6 6h10v7h-1v3l-3-3H6z" fill="#b5e01f" stroke="#789c12" />
          </svg>
        </button>
        <button aria-label="Ajuda">
          <svg width="16" height="16" viewBox="0 0 16 16">
            <circle cx="7.500" cy="7" r="6.500" fill="#3f9e3c" />
            <path d="M3 4c3-3 7-3 9 0-3 1-6 1-9 0z" fill="#c5efc0" />
            <path d="M2 11c3-2 4 1 8 2l-3 1z" fill="#dff0e0" />
            <circle cx="11" cy="11" r="4.500" fill="#2a62d3" />
            <path d="M8 11h1M11 9v4M13 11h1" stroke="#ffffff" />
          </svg>
        </button>
      </TopTools>
    </TopBar>
    <Ribbon>
      {ribbonGroups.map((group) => (
        <RibbonGroup key={group.caption}>
          <GroupItems>
            {group.items.map((item) => (
              <RibbonButton key={item.lines.join(' ')} $w={item.w}>
                {item.icon}
                <Label>
                  <Lines lines={item.lines} />
                  {item.caret && <Caret $block={item.lines.length === 1} />}
                </Label>
              </RibbonButton>
            ))}
          </GroupItems>
          <GroupCaption>{group.caption}</GroupCaption>
        </RibbonGroup>
      ))}
    </Ribbon>
  </>
);

const SidePanel = () => (
  <Sidebar>
    <SideHeader>
      <BoltIcon />
      <span>Executar</span>
      <button aria-label="Recolher painel">
        <svg width="10" height="10" viewBox="0 0 10 10">
          <path d="M4.500 1l-4 4 4 4M9 1L5 5l4 4" fill="none" stroke="#5078b5" strokeWidth="1.300" />
        </svg>
      </button>
    </SideHeader>
    <SearchBox>
      <SearchHint>
        <SearchIcon />
        <p>
          Pesquise e execute a
          <br />
          transação desejada
        </p>
      </SearchHint>
      <SearchLabel htmlFor="atalho">Nome / Atalho</SearchLabel>
      <SearchInput id="atalho" type="text" />
    </SearchBox>
    <Grip>
      <i />
      <i />
      <i />
      <i />
      <i />
    </Grip>
    <SideItem $active>
      <BoltIcon />
      <span>Executar</span>
    </SideItem>
    <SideItem>
      <GearsIcon />
      <span>Ações customizadas</span>
    </SideItem>
    <SideItem>
      <StarIcon />
      <span>Minhas Telas</span>
    </SideItem>
    <SideFooter>
      <FilterIcon />
      <Caret />
    </SideFooter>
  </Sidebar>
);

const CalendarDocument = () => (
  <Main>
    <DocTabs>
      <DocTab aria-label="Janelas">
        <WindowsIcon />
      </DocTab>
      <DocTab aria-label="Tarefas">
        <ClipboardIcon />
      </DocTab>
      <DocTab $active>Calendário</DocTab>
      <DocMenu aria-label="Lista de abas" />
    </DocTabs>
    <Document>
      <TabBand>
        <QuickMenu aria-label="Personalizar">
          <svg width="7" height="8" viewBox="0 0 7 8">
            <path d="M1 1.500h5" stroke="#444444" />
            <path d="M0.500 4h6L3.500 7z" fill="#444444" />
          </svg>
        </QuickMenu>
        <BandTabs>
          <BandTab $w={67} $active>Principal</BandTab>
          <BandTab $w={101}>Apontamentos</BandTab>
        </BandTabs>
      </TabBand>
      <InnerRibbon>
        <InnerGroup $w={227}>
          <InnerButton $w={66}>
            <AgendaIcon />
            <Label>
              Minha
              <br />
              agenda <Caret $color="#555555" />
            </Label>
          </InnerButton>
          <InnerButton $w={62}>
            <MatrixIcon />
            <Label>Matriz/Filial</Label>
          </InnerButton>
          <InnerButton $w={92}>
            <UserCalendarIcon />
            <Label>Visualizar interf.</Label>
          </InnerButton>
        </InnerGroup>
        <InnerGroup $w={104}>
          <InnerButton $w={52}>
            <MonthIcon />
            <Label>Mês</Label>
          </InnerButton>
          <InnerButton $w={42}>
            <WeekIcon />
            <Label>Semana</Label>
          </InnerButton>
        </InnerGroup>
        <InnerGroup $w={637}>
          {taskActions.map((action) => (
            <InnerButton key={action.kind} $w={action.w} disabled>
              <FolderIcon kind={action.kind} />
              <Label>
                <Lines lines={action.lines} />
              </Label>
            </InnerButton>
          ))}
          <Launcher aria-label="Opções">
            <svg width="8" height="8" viewBox="0 0 8 8">
              <path d="M0.500 6V0.500H6M3 3l4 4M7 3.500V7H3.500" fill="none" stroke="#7f90a8" />
            </svg>
          </Launcher>
        </InnerGroup>
        <InnerGroup $w={62}>
          <InnerText $w={61}>
            <Label>
              Finalizar
              <Caret $block $color="#555555" />
            </Label>
          </InnerText>
        </InnerGroup>
      </InnerRibbon>
      <NavBar>
        <NavButtons>
          <button aria-label="Anterior">
            <svg width="11" height="10" viewBox="0 0 11 10">
              <path d="M10 0.500v9L1 5z" fill="#000000" />
            </svg>
          </button>
          <button>Hoje</button>
          <button aria-label="Próximo">
            <svg width="11" height="10" viewBox="0 0 11 10">
              <path d="M1 0.500v9L10 5z" fill="#000000" />
            </svg>
          </button>
        </NavButtons>
        <MailButton aria-label="E-mail">
          <svg width="24" height="18" viewBox="0 0 24 18">
            <path d="M2 1.500h20v15H2zM2 2l10 9L22 2M2 16l7-7M22 16l-7-7" fill="none" stroke="#000000" strokeWidth="1.500" />
          </svg>
        </MailButton>
      </NavBar>
      <Filler />
      <ReadyBar>
        <span>Pronto!</span>
      </ReadyBar>
      <VersionInfo pad="9px 17px 49px" version="4.00.00.0354" tra="CAL" time="11:14" />
    </Document>
  </Main>
);

const InterfaceDialog = () => {
  const [rows, setRows] = useState(initialRows);

  const toggle = (name) =>
    setRows(rows.map((row) => (row.name === name ? { ...row, checked: !row.checked } : row)));

  return (
    <Dialog role="dialog" aria-label="Configuração da Interface">
      <DialogTitle>
        <span>Configuração da Interface</span>
        <button aria-label="Fechar">
          <svg width="11" height="10" viewBox="0 0 11 10">
            <path d="M1 1l9 8M10 1L1 9" stroke="#6d7f98" strokeWidth="1.800" />
          </svg>
        </button>
      </DialogTitle>
      <DialogBody>
        <PaneTabs>
          <PaneTab $w={119}>Parâmetros Interface</PaneTab>
          <PaneTab $w={128} $active>Limpeza Intermediárias</PaneTab>
          <PaneTab $w={88}>Edição em Lote</PaneTab>
        </PaneTabs>
        <Pane>
          <PaneToolbar>
            <button aria-label="Executar limpeza">
              <RunIcon />
            </button>
          </PaneToolbar>
          <PaneTitle>Exclusão de Registros de Tabelas Intermediárias</PaneTitle>
          <GridArea>
            <GridContent>
              <GroupHint>Arraste aqui o cabeçalho de uma coluna para agrupar</GroupHint>
              <Table>
                <colgroup>
                  <col width="16" />
                  <col width="62" />
                  <col />
                  <col width="78" />
                </colgroup>
                <thead>
                  <tr>
                    <th aria-label="Indicador" />
                    <th>Selecionar</th>
                    <th>Interface</th>
                    <th>Status</th>
                  </tr>
                </thead>
                <tbody>
                  {rows.map(({ name, checked }) => (
                    <Row key={name} $selected={checked}>
                      <td>
                        {checked && (
                          <svg width="9" height="11" viewBox="0 0 9 11" style={{ margin: 'auto' }}>
                            <path d="M2 1.500h2l0.500 0.500 0.500-0.500h2M4.500 2v7M2 9.500h2l0.500-0.500 0.500 0.500h2" fill="none" stroke="#000000" />
                          </svg>
                        )}
                      </td>
                      <td>
                        <Check
                          type="checkbox"
                          aria-label={name}
                          checked={checked}
                          onChange={() => toggle(name)}
                        />
                      </td>
                      <td>{name}</td>
                      <td />
                    </Row>
                  ))}
                </tbody>
              </Table>
            </GridContent>
            <ScrollBar>
              <ScrollArrow aria-label="Subir">
                <svg width="9" height="5" viewBox="0 0 9 5">
                  <path d="M0 5h9L4.500 0z" fill="#44547c" />
                </svg>
              </ScrollArrow>
              <ScrollTrack>
                <Thumb>
                  <svg width="7" height="8" viewBox="0 0 7 8">
                    <path d="M0 0.500h7M0 2.500h7M0 4.500h7M0 6.500h7" stroke="#7f9cc4" />
                  </svg>
                </Thumb>
              </ScrollTrack>
              <ScrollArrow aria-label="Descer">
                <svg width="9" height="5" viewBox="0 0 9 5">
                  <path d="M0 0h9L4.500 5z" fill="#44547c" />
                </svg>
              </ScrollArrow>
            </ScrollBar>
          </GridArea>
        </Pane>
        <VersionInfo pad="13px 16px 7px" version="4.00.00.0035" tra="EXCFG" time="11:15" />
      </DialogBody>
    </Dialog>
  );
};

const App = () => (
  <Page>
    <GlobalStyle />
    <Defs />
    <TopRibbon />
    <Body>
      <SidePanel />
      <CalendarDocument />
    </Body>
    <StatusBar>
      <StatusInfo>
        <span>Usuário: ssadmin</span>
        <span>Conexão: MANGELSHML_COMPLY.xml</span>
      </StatusInfo>
    </StatusBar>
    <Overlay>
      <InterfaceDialog />
    </Overlay>
  </Page>
);

export default App;
